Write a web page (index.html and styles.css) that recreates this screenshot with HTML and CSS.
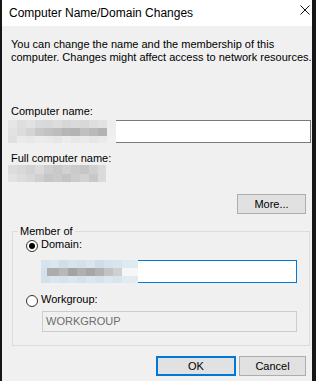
FILE: index.html
```html
<!DOCTYPE html>
<html lang="en">
<head>
    <meta charset="UTF-8">
    <meta name="viewport" content="width=device-width, initial-scale=1.0">
    <title>Computer Name/Domain Changes</title>
    <link rel="stylesheet" href="styles.css">
</head>
<body>
    <div class="window">
        <div class="titlebar">
            <span class="title">Computer Name/Domain Changes</span>
            <svg class="close" width="10" height="10" viewBox="0 0 10 10">
                <path d="M0.5 0.5 L9.5 9.5 M9.5 0.5 L0.5 9.5" stroke="#111" stroke-width="1" fill="none"/>
            </svg>
        </div>

        <div class="content">
            <p class="intro">You can change the name and the membership of this<br>computer. Changes might affect access to network resources.</p>

            <div class="label name-label">Computer name:</div>
            <div class="field-row name-row">
                <div class="mosaic mosaic-name"></div>
                <div class="textbox name-box"></div>
            </div>

            <div class="label full-label">Full computer name:</div>
            <div class="mosaic mosaic-full"></div>

            <div class="button-row more-row">
                <button class="btn more">More...</button>
            </div>

            <fieldset class="group">
                <legend>Member of</legend>
                <div class="group-body">
                    <div class="radio-row"><span class="radio checked"></span>Domain:</div>
                    <div class="field-row domain-row">
                        <div class="mosaic mosaic-domain"></div>
                        <div class="textbox domain-box"></div>
                    </div>
                    <div class="radio-row workgroup-row"><span class="radio"></span>Workgroup:</div>
                    <div class="textbox disabled">WORKGROUP</div>
                </div>
            </fieldset>

            <div class="button-row actions">
                <button class="btn ok">OK</button>
                <button class="btn cancel">Cancel</button>
            </div>
        </div>
    </div>
</body>
</html>
```

FILE: styles.css
```css
body {
    margin: 0;
    background-color: #161616;
    font-family: 'Liberation Sans', Arial, sans-serif;
    font-size: 11px;
    color: #000;
}

.window {
    width: 310px;
    height: 381px;
    margin-left: 2px;
    background-color: #f0f0f0;
}

.titlebar {
    display: flex;
    justify-content: space-between;
    align-items: flex-start;
    height: 26px;
    padding: 0 2px 0 7px;
    background-color: #fff;
}

.title {
    font-size: 12px;
    line-height: 16px;
    margin-top: 5px;
}

.close {
    display: block;
    margin-top: 5px;
}

.content {
    padding-left: 9px;
}

.intro {
    margin: 12px 0 0;
    line-height: 13px;
}

.label {
    line-height: 13px;
}

.name-label {
    margin-top: 41px;
}

.full-label {
    margin-top: 9px;
}

.field-row {
    display: flex;
}

.name-row {
    margin-top: 2px;
    margin-left: -3px;
}

.textbox {
    box-sizing: border-box;
    background-color: #fff;
    border: 1px solid #7a7a7a;
}

.name-box {
    width: 195px;
    height: 23px;
    border-left: none;
}

/* blurred-out values */
.mosaic {
    flex: none;
}

.mosaic-name {
    width: 108px;
    height: 23px;
    background:
        linear-gradient(to right, #e6e6e6 0 9px, #dedede 9px 18px, #e2e2e2 18px 27px, #dadada 27px 36px, #d8d8d8 36px 45px, #dcdcdc 45px 54px, #d6d6d6 54px 63px, #dadada 63px 72px, #d8d8d8 72px 81px, #dedede 81px 90px, #e2e2e2 90px 99px, #ededed 99px) 0 0 / 100% 8px no-repeat,
        linear-gradient(to right, #e2e2e2 0 9px, #dcdcdc 9px 18px, #d4d4d4 18px 27px, #c8c8c8 27px 36px, #c2c2c2 36px 45px, #bdbdbd 45px 54px, #b6b6b6 54px 63px, #b4b4b4 63px 72px, #c0c0c0 72px 81px, #bababa 81px 90px, #b2b2b2 90px 99px, #eeeeee 99px) 0 8px / 100% 8px no-repeat,
        linear-gradient(to right, #e0e0e0 0 9px, #eaeaea 9px 18px, #e8e8e8 18px 27px, #ececec 27px 36px, #eaeaea 36px 45px, #e6e6e6 45px 54px, #ececec 54px 63px, #e8e8e8 63px 72px, #eaeaea 72px 81px, #e6e6e6 81px 90px, #eaeaea 90px 99px, #f0f0f0 99px) 0 16px / 100% 7px no-repeat;
}

.mosaic-full {
    width: 98px;
    height: 17px;
    margin-left: -3px;
    background:
        linear-gradient(to right, #dcdcdc 0 9px, #d8d8d8 9px 18px, #d2d2d2 18px 27px, #dadada 27px 36px, #cecece 36px 45px, #c8c8c8 45px 54px, #d0d0d0 54px 63px, #cacaca 63px 72px, #c6c6c6 72px 81px, #d0d0d0 81px 90px, #dadada 90px) 0 0 / 100% 9px no-repeat,
        linear-gradient(to right, #e2e2e2 0 9px, #dcdcdc 9px 18px, #d8d8d8 18px 27px, #d0d0d0 27px 36px, #c6c6c6 36px 45px, #cacaca 45px 54px, #c4c4c4 54px 63px, #cccccc 63px 72px, #d2d2d2 72px 81px, #c8c8c8 81px 90px, #dadada 90px) 0 9px / 100% 8px no-repeat;
}

.mosaic-domain {
    width: 97px;
    height: 23px;
    background:
        linear-gradient(to right, #d6e3ec 0 9px, #dbe6ee 9px 18px, #cfdfea 18px 27px, #d8e4ec 27px 36px, #d2e1eb 36px 45px, #dae5ed 45px 54px, #cfdde8 54px 63px, #d6e3ec 63px 72px, #d9e5ed 72px 81px, #dfe9f0 81px) 0 0 / 100% 8px no-repeat,
        linear-gradient(to right, #d4e1ea 0 6px, #adadad 6px 18px, #b8b8b8 18px 27px, #a3a3a3 27px 36px, #b0b0b0 36px 45px, #a6a6a6 45px 54px, #b2b2b2 54px 63px, #c2c2c2 63px 72px, #d0d0d0 72px 81px, #f4f7f9 81px) 0 8px / 100% 8px no-repeat,
        linear-gradient(to right, #d4e1ea 0 9px, #dae5ed 9px 18px, #d6e3ec 18px 27px, #dce6ee 27px 36px, #d4e2eb 36px 45px, #dbe6ee 45px 54px, #d6e3ec 54px 63px, #dde7ef 63px 72px, #d9e5ed 72px 81px, #e2ebf1 81px) 0 16px / 100% 7px no-repeat;
}

.button-row {
    display: flex;
    justify-content: flex-end;
    gap: 3px;
    padding-right: 6px;
}

.more-row {
    margin-top: 12px;
}

.btn {
    box-sizing: border-box;
    height: 20px;
    padding: 0;
    font-family: inherit;
    font-size: 11px;
    color: #000;
    background-color: #e1e1e1;
    border: 1px solid #adadad;
}

.more {
    width: 69px;
}

.ok {
    width: 80px;
    border: 2px solid #0078d7;
}

.cancel {
    width: 67px;
}

.group {
    width: 298px;
    box-sizing: border-box;
    margin: 11px 0 0 1px;
    padding: 0;
    border: 1px solid #dcdcdc;
}

.group legend {
    margin-left: 5px;
    padding: 0 2px;
    line-height: 13px;
}

.group-body {
    padding: 0 0 13px 13px;
}

.radio-row {
    display: flex;
    align-items: flex-start;
    line-height: 13px;
}

.workgroup-row {
    margin-top: 10px;
}

.radio {
    box-sizing: border-box;
    width: 12px;
    height: 12px;
    margin: 2px 3px 0 0;
    border: 1px solid #333;
    border-radius: 50%;
    background-color: #fff;
    display: flex;
    align-items: center;
    justify-content: center;
}

.radio.checked::after {
    content: '';
    width: 6px;
    height: 6px;
    border-radius: 50%;
    background-color: #000;
}

.domain-row {
    margin: 8px 0 0 15px;
}

.domain-box {
    width: 159px;
    height: 23px;
    border: 1px solid #0078d7;
    border-left: none;
}

.textbox.disabled {
    width: 255px;
    height: 21px;
    margin: 4px 0 0 16px;
    padding-left: 3px;
    line-height: 19px;
    color: #6d6d6d;
    background-color: #f0f0f0;
    border-color: #cccccc;
}

.actions {
    margin-top: 10px;
}
```
